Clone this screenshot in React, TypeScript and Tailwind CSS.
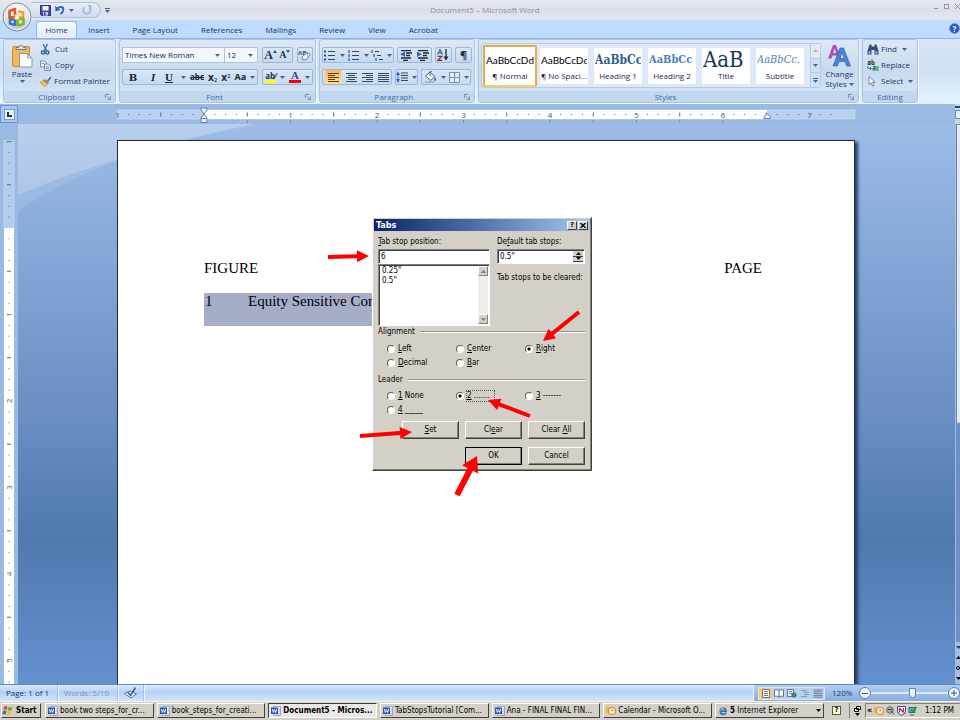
import React from "react";

const UI = "font-['Open_Sans','Noto_Sans',sans-serif]";
const CLASSIC = "font-['DejaVu_Sans_Condensed','Open_Sans',sans-serif]";

/* ---------- small shared pieces ---------- */

function Caret({ className = "text-[#44618f]" }: { className?: string }) {
  return (
    <svg width="5" height="3" viewBox="0 0 5 3" className={`shrink-0 ${className}`} aria-hidden="true">
      <path d="M0 0h5L2.5 3z" fill="currentColor" />
    </svg>
  );
}

function Launcher() {
  return (
    <svg width="6" height="6" viewBox="0 0 6 6" fill="none" stroke="#6c8fbf" aria-hidden="true">
      <path d="M.5 4V.5H4M2.5 2.5l2 2M5.500 2.500v3h-3" />
    </svg>
  );
}

function Group({ label, launcher = true, className = "", children }: {
  label: string; launcher?: boolean; className?: string; children: React.ReactNode;
}) {
  return (
    <section
      aria-label={label}
      className={`flex flex-col overflow-hidden rounded-[3px] border border-[#a9c4e6] bg-linear-to-b from-[#dde8f5] via-[#c9daee] to-[#d6e6f7] shadow-[1px_1px_0_#eef6ff] ${className}`}
    >
      <div className="flex min-h-0 flex-1">{children}</div>
      <div className="flex h-[11px] shrink-0 items-center bg-[#c1d8f0] px-1">
        <span className="flex-1 text-center leading-3 text-[#3e6aaa]">{label}</span>
        {launcher && (
          <button aria-label={`${label} options`}>
            <Launcher />
          </button>
        )}
      </div>
    </section>
  );
}

function Cluster({ className = "", children }: { className?: string; children: React.ReactNode }) {
  return (
    <div className={`flex h-4 items-center justify-around rounded-[2px] border border-[#9ab7dd] bg-linear-to-b from-[#d9e6f6] to-[#c6d9f0] ${className}`}>
      {children}
    </div>
  );
}

function Tool({ label, caret = false, className = "", children }: {
  label: string; caret?: boolean; className?: string; children: React.ReactNode;
}) {
  return (
    <button aria-label={label} className={`flex h-full items-center justify-center gap-1 ${className}`}>
      {children}
      {caret && <Caret />}
    </button>
  );
}

/* ---------- icons ---------- */

function OfficeLogo() {
  return (
    <svg width="30" height="30" viewBox="0 0 30 30" aria-hidden="true">
      <defs>
        <radialGradient id="orb" cx=".5" cy=".3" r=".75">
          <stop offset="0" stopColor="#fff" />
          <stop offset=".6" stopColor="#dde3ec" />
          <stop offset="1" stopColor="#aab6c8" />
        </radialGradient>
      </defs>
      <circle cx="15" cy="15" r="14" fill="url(#orb)" stroke="#7d8796" />
      <circle cx="15" cy="15" r="12.800" fill="none" stroke="#fff" strokeOpacity=".8" />
      <g fill="none" strokeWidth="2.600" strokeLinejoin="round">
        <path d="M7.500 9l5.500-2v7L7.500 15.800z" stroke="#e2571b" />
        <path d="M16 9.500l5 .9v5.200h-5" stroke="#f0a21c" />
        <path d="M8 17.500h5v5.500l-5-1.500z" stroke="#3a74c4" />
        <path d="M15.500 17h6v5l-6 1.500z" stroke="#7fb02e" />
      </g>
      <path d="M13 12.500h4v5h-4z" fill="#fff" stroke="#f3b53d" strokeWidth=".8" />
    </svg>
  );
}

function SaveIcon() {
  return (
    <svg width="11" height="11" viewBox="0 0 11 11" aria-hidden="true">
      <path d="M.5.5h10v10h-9l-1-1z" fill="#4a49a8" stroke="#31318a" />
      <path d="M2.500 1h6v4.500h-6z" fill="#eef3fb" />
      <path d="M3 7h5v3.500H3z" fill="#c7cfe6" />
      <path d="M4 7.500h1.500V10H4z" fill="#31318a" />
    </svg>
  );
}

function UndoIcon() {
  return (
    <svg width="10" height="10" viewBox="0 0 10 10" aria-hidden="true">
      <path d="M2.500 3.500C5 .8 8.500 1.700 8.300 4.700 8.200 6.700 7 8 5.300 9" fill="none" stroke="#2f62b5" strokeWidth="1.900" />
      <path d="M0 1l.6 5.500L5.500 4.800z" fill="#2f62b5" />
    </svg>
  );
}

function RedoIcon() {
  return (
    <svg width="10" height="10" viewBox="0 0 10 10" aria-hidden="true">
      <path d="M2.300 2.300C0 5 1.500 8.700 5 8.700S9.300 5 7.300 2.500" fill="none" stroke="#a9b9d2" strokeWidth="1.800" />
      <path d="M5 0h4.500v4.500z" fill="#a9b9d2" />
    </svg>
  );
}

function PasteIcon() {
  return (
    <svg width="21" height="24" viewBox="0 0 21 24" aria-hidden="true">
      <rect x=".5" y="2.500" width="17" height="20" rx="1.500" fill="#f0b95a" stroke="#c98b2e" />
      <path d="M4 5.500h10V3.500h-2.500C11 .6 7 .6 6.500 3.500H4z" fill="#d9dde3" stroke="#70757d" strokeWidth=".9" />
      <path d="M7.500 9.500h8l4.500 4.500v9h-12.500z" fill="#fff" stroke="#8b98ac" />
      <path d="M15.500 9.500V14H20z" fill="#cfd9e8" stroke="#8b98ac" strokeWidth=".8" />
    </svg>
  );
}

function CutIcon() {
  return (
    <svg width="11" height="11" viewBox="0 0 11 11" fill="none" aria-hidden="true">
      <path d="M3 0l3.800 7M7.500 0L4 7" stroke="#41608f" strokeWidth="1.200" />
      <circle cx="3" cy="8.500" r="1.600" stroke="#2557a4" strokeWidth="1.300" />
      <circle cx="7.300" cy="8.500" r="1.600" stroke="#2557a4" strokeWidth="1.300" />
    </svg>
  );
}

function CopyIcon() {
  return (
    <svg width="11" height="11" viewBox="0 0 11 11" stroke="#5878ab" strokeWidth=".8" aria-hidden="true">
      <path d="M.5 1h4l1.500 1.500V7H.5z" fill="#e6effb" />
      <path d="M4.500 4h4L10.500 6v4.500h-6z" fill="#d7e5f8" />
      <path d="M6 7h3M6 8.700h3M1.800 3.500h2" />
    </svg>
  );
}

function PainterIcon() {
  return (
    <svg width="12" height="11" viewBox="0 0 12 11" aria-hidden="true">
      <path d="M7 4.500L10.500.5l1 .9L8.500 5.500z" fill="#56649b" />
      <path d="M4.500 3l4.500 3-1 1.800L3.500 5z" fill="#7a83a8" />
      <path d="M3.500 4.500L8 7.500 5 10.500.3 6.700z" fill="#efb62f" stroke="#bb7c16" strokeWidth=".7" />
      <path d="M2.500 6.500L5.500 9" stroke="#fff2b5" />
    </svg>
  );
}

function EraserIcon() {
  return (
    <svg width="13" height="12" viewBox="0 0 13 12" aria-hidden="true">
      <text x="0" y="5.500" fontSize="6" fontWeight="700" fill="#44505f" fontFamily="Open Sans">AB</text>
      <path d="M4 8l5-4.500 3.200 1.800L8 10.800H5z" fill="#fafcff" stroke="#5b7090" strokeWidth=".9" />
      <path d="M9 3.500l.5 4" stroke="#5b7090" strokeWidth=".7" />
    </svg>
  );
}

function ListIcon({ kind }: { kind: "bullet" | "number" | "multi" }) {
  const indent = kind === "multi" ? [0, 2, 4] : [0, 0, 0];
  return (
    <svg width="12" height="11" viewBox="0 0 12 11" aria-hidden="true">
      {[0, 1, 2].map((i) => (
        <g key={i}>
          {kind === "bullet" ? (
            <rect x="0" y={i * 4 + 0.5} width="2" height="2" fill="#2b57a0" />
          ) : (
            <path d={`M${indent[i] + 1} ${i * 4}v3`} stroke="#2b57a0" strokeWidth="1.200" />
          )}
          <path d={`M${indent[i] + 4} ${i * 4 + 1.5}H${kind === "multi" ? indent[i] + 8 : 11}`} stroke="#3b4656" strokeWidth="1.200" />
        </g>
      ))}
    </svg>
  );
}

function IndentIcon({ out = false }: { out?: boolean }) {
  return (
    <svg width="12" height="11" viewBox="0 0 12 11" aria-hidden="true">
      <path d="M1 .5h10M6 3h6M6 5.500h4M1 8h10M3 10.500h5" stroke="#20262e" strokeWidth="1.400" />
      <path d={out ? "M5 1.500L0 4.300 5 7.100z" : "M0 1.500l5 2.800-5 2.800z"} fill="#2b67c6" />
    </svg>
  );
}

function AlignIcon({ kind }: { kind: "left" | "center" | "right" | "justify" }) {
  const d = {
    left: "M0 .5h11M0 2.500h7M0 4.500h11M0 6.500h7M0 8.500h11",
    center: "M0 .5h11M2 2.500h7M0 4.500h11M2 6.500h7M0 8.500h11",
    right: "M0 .5h11M4 2.500h7M0 4.500h11M4 6.500h7M0 8.500h11",
    justify: "M0 .5h11M0 2.500h11M0 4.500h11M0 6.500h11M0 8.500h11",
  }[kind];
  return (
    <svg width="11" height="9" viewBox="0 0 11 9" aria-hidden="true">
      <path d={d} stroke={kind === "left" ? "#5a3d14" : "#3b4656"} strokeWidth="1.100" />
    </svg>
  );
}

function SortIcon() {
  return (
    <svg width="12" height="12" viewBox="0 0 12 12" fill="none" aria-hidden="true">
      <path d="M.5 5.500L3 .5l2.500 5M1.500 4h3" stroke="#2b57a0" strokeWidth="1.100" />
      <path d="M.8 7.300h4L.8 11.300h4.400" stroke="#8d2434" strokeWidth="1.200" />
      <path d="M9 0v9" stroke="#20262e" strokeWidth="1.300" />
      <path d="M6.500 7.500h5L9 11.500z" fill="#20262e" />
    </svg>
  );
}

function SpacingIcon() {
  return (
    <svg width="12" height="12" viewBox="0 0 12 12" aria-hidden="true">
      <path d="M5 2h7M5 4.500h7M5 7h7M5 9.500h7" stroke="#3b4656" strokeWidth="1.100" />
      <path d="M2 2v8" stroke="#2b67c6" />
      <path d="M0 4l2-4 2 4zM0 8l2 4 2-4z" fill="#2b67c6" />
    </svg>
  );
}

function BucketIcon() {
  return (
    <svg width="13" height="12" viewBox="0 0 13 12" aria-hidden="true">
      <path d="M1.500 5L6 1l5 4.500-4.500 4z" fill="#f3f7fd" stroke="#4e6486" />
      <path d="M6 5V1c0-1 2-1 2 0" fill="none" stroke="#4e6486" />
      <path d="M11 6c2 2.500 1 4 0 4s-1.500-1.500 0-4z" fill="#3c73c9" />
      <path d="M1 11h9" stroke="#a9b5c7" strokeWidth="1.800" />
    </svg>
  );
}

function BordersIcon() {
  return (
    <svg width="11" height="11" viewBox="0 0 11 11" fill="none" stroke="#7f8fa8" aria-hidden="true">
      <path d="M.5.5h10v10H.5z" fill="#e3ecf8" />
      <path d="M5.500.5v10M.5 5.500h10" />
    </svg>
  );
}

function BinocularsIcon() {
  return (
    <svg width="12" height="11" viewBox="0 0 12 11" fill="#2e4f80" aria-hidden="true">
      <path d="M2.500.5h2v2h3v-2h2L11.500 7v3.500h-4V6h-3v4.500h-4V7z" />
      <path d="M1.500 7.500h2v2h-2zM8.500 7.500h2v2h-2z" fill="#a8c2e8" />
    </svg>
  );
}

function ReplaceIcon() {
  return (
    <svg width="13" height="12" viewBox="0 0 13 12" fill="none" aria-hidden="true">
      <path d="M1 2.500h2.200v3H1.200V4h2M5 .5v5M5 3h2v2.500H5" stroke="#39424f" strokeWidth="1.100" />
      <path d="M6 7.700h2.200v3.300H6.200V9.300h2M12 8h-2v3h2" stroke="#25893a" strokeWidth="1.200" />
      <path d="M1 7v2.500h3M3 8l1.500 1.500L3 11" stroke="#2b67c6" strokeWidth=".9" />
    </svg>
  );
}

function CursorIcon() {
  return (
    <svg width="9" height="11" viewBox="0 0 9 11" aria-hidden="true">
      <path d="M2 .5v8l2-1.800 1.500 3.500 1.400-.6L5.500 6.300H8z" fill="#fff" stroke="#596c8c" strokeWidth=".8" />
    </svg>
  );
}

function StylesIcon() {
  return (
    <svg width="23" height="23" viewBox="0 0 23 23" aria-hidden="true">
      <path fillRule="evenodd" d="M0 14.500L5 1h3l5 13.500h-3l-1-3H4.500l-1 3zM5.200 9h3L6.600 4.200z" fill="#ad4fb5" />
      <path fillRule="evenodd" d="M5 22L12 4h3.500L22.500 22h-4l-1.500-4.500h-6L9.500 22zM11.800 14.500h4.400l-2.200-6z" fill="#4b83d4" stroke="#295ca8" strokeWidth=".6" />
    </svg>
  );
}

function WordIcon() {
  return (
    <svg width="10" height="10" viewBox="0 0 10 10" className="shrink-0" aria-hidden="true">
      <path d="M2.500.5h7v9h-7z" fill="#f5f8fe" stroke="#8397c4" strokeWidth=".8" />
      <path d="M7.500 3h1.500M7.500 5h1.500M5 8h4" stroke="#7c93c9" strokeWidth=".8" />
      <path d="M0 1.500h7v6.500H0z" fill="#2c56a8" />
      <path d="M1.300 3l1 3.500 1.200-3 1.200 3 1-3.500" fill="none" stroke="#fff" strokeWidth=".9" />
    </svg>
  );
}

function OutlookIcon() {
  return (
    <svg width="10" height="10" viewBox="0 0 10 10" className="shrink-0" aria-hidden="true">
      <path d="M0 1h6v6H0z" fill="#f2b33c" />
      <circle cx="6" cy="5" r="3.500" fill="#fffbe8" stroke="#e08a1d" strokeWidth="1.200" />
      <path d="M6 3v2.200l1.500-.8" fill="none" stroke="#a3661a" strokeWidth=".8" />
    </svg>
  );
}

function ExplorerIcon() {
  return (
    <svg width="10" height="10" viewBox="0 0 10 10" className="shrink-0" fill="none" aria-hidden="true">
      <path d="M8 6.500C7 9 3 9 2.300 6 1.500 3 5 1.200 7 3c.8.700 1 1.500 1 2.200H3" stroke="#2474cf" strokeWidth="1.700" />
      <path d="M.7 9C-.8 7 4 .8 9.500.8" stroke="#efb82d" strokeWidth="1" />
    </svg>
  );
}

function WindowsIcon() {
  return (
    <svg width="12" height="11" viewBox="0 0 12 11" className="shrink-0" aria-hidden="true">
      <path d="M2 1.500q2-1 3.500 0L4.700 5Q3 4 1.200 5z" fill="#e2502b" />
      <path d="M6.300 1.800q2 1 4.200 0L9.600 5.300q-2 1-4 0z" fill="#6bb12f" />
      <path d="M1 6q2-1 3.500 0l-.8 3.500q-1.700-1-3.500 0z" fill="#3474d3" />
      <path d="M5.300 6.300q2 1 4 0l-.8 3.500q-2 1-4 0z" fill="#f3bc27" />
    </svg>
  );
}

/* ---------- title bar, tabs ---------- */

function TitleBar() {
  return (
    <header className="relative flex h-5 shrink-0 items-center bg-linear-to-b from-[#e4e9f0] via-[#dbe1ea] to-[#e3e7ee]">
      <button aria-label="Office Button" className="absolute left-[2px] top-[2px] z-10">
        <OfficeLogo />
      </button>
      <div className="ml-8 flex h-4 w-[69px] items-center rounded-r-full border border-l-0 border-[#b3c0d4] bg-linear-to-b from-[#e6edf7] to-[#d0dcec] pl-2">
        <button aria-label="Save"><SaveIcon /></button>
        <button aria-label="Undo" className="ml-1 flex items-center gap-1"><UndoIcon /><Caret /></button>
        <button aria-label="Repeat" className="ml-2"><RedoIcon /></button>
      </div>
      <button aria-label="Customize Quick Access Toolbar" className="ml-1 flex flex-col items-center gap-px">
        <span className="h-px w-[5px] bg-[#44618f]" />
        <Caret />
      </button>
      <h1 className="flex-1 pr-[74px] text-center leading-4 text-[#8b8f95]">Document5 – Microsoft Word</h1>
      <div className="mb-2 flex w-[26px] shrink-0 items-center gap-[6px]">
        <button aria-label="Minimize" className="mt-1 h-px w-1 shrink-0 bg-[#8f969f]" />
        <button aria-label="Restore" className="size-[5px] shrink-0 border border-[#8f969f]" />
        <button aria-label="Close" className="shrink-0">
          <svg width="5" height="5" viewBox="0 0 5 5" stroke="#8f969f" aria-hidden="true"><path d="M0 0l5 5M5 0L0 5" /></svg>
        </button>
      </div>
    </header>
  );
}

function Tabs() {
  const tabs = ["Insert", "Page Layout", "References", "Mailings", "Review", "View", "Acrobat"];
  return (
    <nav aria-label="Ribbon tabs" className="flex h-[18px] shrink-0 items-end bg-[#bfdbff] pl-9 text-[#1b3370]">
      <button className="h-[17px] w-[41px] rounded-t-[3px] border border-b-0 border-[#93b7e6] bg-linear-to-b from-[#f4f9ff] to-[#e1ecf8]">Home</button>
      <div className="ml-[11px] flex h-[17px] gap-[23px]">
        {tabs.map((t) => (
          <button key={t}>{t}</button>
        ))}
      </div>
      <button aria-label="Help" className="mb-1 ml-auto flex size-[11px] items-center justify-center rounded-full border border-[#7fa3dc] bg-[#1d58c4] font-bold leading-none text-white">?</button>
    </nav>
  );
}

/* ---------- ribbon ---------- */

const STYLES = [
  { name: "¶ Normal", sample: "AaBbCcDd", cls: "font-['Lato'] text-[10px] text-black" },
  { name: "¶ No Spaci...", sample: "AaBbCcDd", cls: "font-['Lato'] text-[10px] text-black" },
  { name: "Heading 1", sample: "AaBbCc", cls: "font-['DejaVu_Serif_Condensed'] text-[12px] font-bold text-[#2f5d93]" },
  { name: "Heading 2", sample: "AaBbCc", cls: "font-['DejaVu_Serif_Condensed'] text-[11px] font-bold text-[#4a7fbd]" },
  { name: "Title", sample: "AaB", cls: "font-['DejaVu_Serif_Condensed'] text-[22px] text-[#1b365d]" },
  { name: "Subtitle", sample: "AaBbCc.", cls: "font-['DejaVu_Serif_Condensed'] text-[11px] italic text-[#4a7fbd]" },
];

function Ribbon() {
  return (
    <div className="flex h-[66px] shrink-0 gap-[3px] border-t border-b border-[#8db2e3] border-b-[#d9f2fb] bg-linear-to-b from-[#d9e6f5] via-[#cfe0f3] to-[#e4f4ff] pl-[3px] text-[#1b3370]">
      <Group label="Clipboard" className="w-[113px]">
        <button className="flex w-[36px] flex-col items-center pt-1">
          <PasteIcon />
          <span className="leading-3">Paste</span>
          <Caret />
        </button>
        <div className="flex flex-col pt-px">
          <button className="flex h-4 items-center gap-1"><CutIcon />Cut</button>
          <button className="flex h-4 items-center gap-1"><CopyIcon />Copy</button>
          <button className="flex h-4 items-center gap-[2px]"><PainterIcon />Format Painter</button>
        </div>
      </Group>

      <Group label="Font" className="w-[197px]">
        <div className="flex w-full flex-col gap-[6px] px-[2px] pt-[7px]">
          <div className="flex gap-1">
            <div className="flex h-4 border border-[#abc3e4] bg-[#f3f8ff]">
              <div className="relative flex w-[102px] items-center border-r border-[#abc3e4]">
                <select aria-label="Font" className="w-full appearance-none pl-[2px] leading-3 text-[#1c2a45]"><option>Times New Roman</option></select>
                <Caret className="pointer-events-none absolute right-1 text-[#44618f]" />
              </div>
              <div className="relative flex w-[32px] items-center">
                <select aria-label="Font size" className="w-full appearance-none pl-[2px] leading-3 text-[#1c2a45]"><option>12</option></select>
                <Caret className="pointer-events-none absolute right-1 text-[#44618f]" />
              </div>
            </div>
            <Cluster className="w-[32px] font-['Liberation_Serif'] font-bold text-[#26324a]">
              <Tool label="Grow Font"><span className="flex text-[12px] leading-3">A<svg width="4" height="3" viewBox="0 0 4 3" className="mt-px" aria-hidden="true"><path d="M0 3l2-3 2 3z" fill="#2b57a0" /></svg></span></Tool>
              <Tool label="Shrink Font"><span className="flex text-[10px] leading-3">A<svg width="4" height="3" viewBox="0 0 4 3" className="mt-px" aria-hidden="true"><path d="M0 0l2 3 2-3z" fill="#2b57a0" /></svg></span></Tool>
            </Cluster>
            <Cluster className="w-[17px]"><Tool label="Clear Formatting"><EraserIcon /></Tool></Cluster>
          </div>
          <div className="flex gap-1">
            <Cluster className="w-[137px] font-['Liberation_Serif'] text-[11px] text-[#1c2431]">
              <Tool label="Bold" className="w-4 font-['DejaVu_Serif'] text-[10px] font-bold">B</Tool>
              <Tool label="Italic" className="w-4 font-bold italic">I</Tool>
              <Tool label="Underline" caret><span className="mr-1 font-bold underline">U</span></Tool>
              <Tool label="Strikethrough" className="font-['Open_Sans'] text-[8px] font-bold line-through">abc</Tool>
              <Tool label="Subscript" className="font-['Open_Sans'] text-[10px] font-bold"><span>x<sub className="text-[6px] text-[#2b57a0]">2</sub></span></Tool>
              <Tool label="Superscript" className="font-['Open_Sans'] text-[10px] font-bold"><span>x<sup className="text-[6px] text-[#2b57a0]">2</sup></span></Tool>
              <Tool label="Change Case" caret className="font-['Open_Sans'] text-[9px] font-bold">Aa</Tool>
            </Cluster>
            <Cluster className="w-[51px]">
              <Tool label="Highlight" caret>
                <span className="flex flex-col border-b-[3px] border-[#ffff00] font-bold leading-[9px] text-[#26324a]">ab⁄</span>
              </Tool>
              <Tool label="Font Color" caret>
                <span className="flex w-3 flex-col items-center border-b-[3px] border-[#f00] font-['Liberation_Serif'] text-[11px] font-bold leading-[9px] text-[#2b4a86]">A</span>
              </Tool>
            </Cluster>
          </div>
        </div>
      </Group>

      <Group label="Paragraph" className="w-[156px]">
        <div className="flex w-full flex-col gap-[6px] px-[2px] pt-[7px]">
          <div className="flex gap-[3px]">
            <Cluster className="w-[74px]">
              <Tool label="Bullets" caret><ListIcon kind="bullet" /></Tool>
              <Tool label="Numbering" caret><ListIcon kind="number" /></Tool>
              <Tool label="Multilevel List" caret><ListIcon kind="multi" /></Tool>
            </Cluster>
            <Cluster className="w-[35px]">
              <Tool label="Decrease Indent"><IndentIcon out /></Tool>
              <Tool label="Increase Indent"><IndentIcon /></Tool>
            </Cluster>
            <Cluster className="w-[18px]"><Tool label="Sort"><SortIcon /></Tool></Cluster>
            <Cluster className="w-[17px]"><Tool label="Show marks" className="text-[11px] font-bold text-[#26324a]">¶</Tool></Cluster>
          </div>
          <div className="flex gap-[3px]">
            <Cluster className="w-[70px]">
              <Tool label="Align Left" className="w-4 bg-linear-to-b from-[#f6b866] to-[#ffe08a]"><AlignIcon kind="left" /></Tool>
              <Tool label="Center"><AlignIcon kind="center" /></Tool>
              <Tool label="Align Right"><AlignIcon kind="right" /></Tool>
              <Tool label="Justify"><AlignIcon kind="justify" /></Tool>
            </Cluster>
            <Cluster className="w-[23px]"><Tool label="Line spacing" caret><SpacingIcon /></Tool></Cluster>
            <Cluster className="w-[50px]">
              <Tool label="Shading" caret><BucketIcon /></Tool>
              <Tool label="Borders" caret><BordersIcon /></Tool>
            </Cluster>
          </div>
        </div>
      </Group>

      <Group label="Styles" className="w-[381px]">
        <div className="ml-[2px] mt-[3px] flex h-[45px] w-[340px] items-center rounded-[3px] border border-[#b4cbe8] bg-[#dbe9f8]">
          <div className="flex min-w-0 flex-1 items-center gap-[6px] pl-px">
            {STYLES.map((s, i) => (
              <button
                key={s.name}
                className={i === 0
                  ? "-mr-[3px] flex h-[42px] w-[54px] shrink-0 flex-col justify-center overflow-hidden rounded-[2px] border-2 border-[#e9a94a] border-b-[#f8cd5c] bg-white"
                  : "flex h-9 w-12 shrink-0 flex-col justify-center overflow-hidden bg-white"}
              >
                <span className="mx-px flex h-[20px] items-center overflow-hidden">
                  <span className={`whitespace-nowrap leading-5 ${s.cls}`}>{s.sample}</span>
                </span>
                <span className="w-full whitespace-nowrap text-center leading-3 text-[#1e1e5a]">{s.name}</span>
              </button>
            ))}
          </div>
          <div className="flex h-full w-[10px] shrink-0 flex-col border-l border-[#b4cbe8]">
            <button aria-label="Row up" className="flex flex-1 items-center justify-center bg-[#e6e9ee]"><Caret className="rotate-180 text-[#a8b0bc]" /></button>
            <button aria-label="Row down" className="flex flex-1 items-center justify-center border-y border-[#b4cbe8] bg-[#cfe0f4]"><Caret /></button>
            <button aria-label="More styles" className="flex flex-1 flex-col items-center justify-center gap-px bg-[#cfe0f4]"><span className="h-px w-[5px] bg-[#44618f]" /><Caret /></button>
          </div>
        </div>
        <button className="flex flex-1 flex-col items-center pt-1">
          <StylesIcon />
          <span className="mt-[2px] leading-[10px]">Change</span>
          <span className="flex items-center gap-[2px] leading-[10px]">Styles <Caret /></span>
        </button>
      </Group>

      <Group label="Editing" launcher={false} className="w-[56px]">
        <div className="flex flex-col pl-1 pt-px">
          <button className="flex h-4 items-center gap-[2px]"><BinocularsIcon />Find <Caret className="ml-[3px] text-[#44618f]" /></button>
          <button className="flex h-4 items-center gap-px"><ReplaceIcon />Replace</button>
          <button className="flex h-4 items-center gap-[5px]"><CursorIcon />Select <Caret /></button>
        </div>
      </Group>
    </div>
  );
}

/* ---------- rulers ---------- */

const INCH = 86.5;

function marks(from: number, to: number) {
  const list: { at: number; kind: "num" | "half" | "dot"; n: number }[] = [];
  for (let e = from; e <= to; e++) {
    list.push({ at: (e * INCH) / 8, kind: e % 8 === 0 ? "num" : e % 4 === 0 ? "half" : "dot", n: Math.abs(e / 8) });
  }
  return list.filter((m) => !(m.kind === "num" && m.n === 0));
}

function HorizontalRuler() {
  return (
    <div className="flex h-5 shrink-0 items-center bg-[#9ab9e3]">
      <button aria-label="Tab selector" className="flex h-[18px] w-[18px] items-center justify-center border border-[#6b93d6] bg-[#a9c6ee]">
        <span className="flex size-[11px] items-center justify-center border border-[#7b9cd0] bg-[#e7effa]">
          <span className="size-[5px] border-b-2 border-l-2 border-[#26324a]" />
        </span>
      </button>
      <div className="flex flex-1 justify-center pr-px">
        <svg width="738" height="18" viewBox="-87 0 738 18" className="overflow-visible" aria-label="Horizontal ruler">
          <rect x="-87" y="5" width="738" height="9" fill="#b9d0ee" stroke="#cfdff5" strokeWidth=".6" />
          <rect x="0" y="5" width="563" height="9" fill="#fff" />
          {marks(-8, 58).map((m) =>
            m.kind === "num" ? (
              <text key={m.at} x={m.at} y="12.500" textAnchor="middle" fontSize="8" fill="#4a5464">{m.n}</text>
            ) : (
              <path key={m.at} d={m.kind === "half" ? `M${m.at} 7.500v4` : `M${m.at} 9v1`} stroke="#5b6675" />
            ),
          )}
          {Array.from({ length: 12 }, (_, i) => (
            <path key={i} d={`M${((i + 1) * INCH) / 2} 15.500v2`} stroke="#5f7ea9" />
          ))}
          <path d="M-3 3h6v2L0 9l-3-4zM-3 13l3-4 3 4v4.500h-6zM-3 13.500h6M560 13.500v-1.500l3-3.500 3.500 3.500v1.500z" fill="#e9eff8" stroke="#60769b" strokeWidth=".9" />
        </svg>
      </div>
      <button aria-label="View Ruler" className="flex h-full w-[5px] flex-col gap-[2px] bg-[#c4d7f1] pt-[2px]">
        <span className="h-[2px] w-full bg-[#2d456e]" />
        <span className="h-[9px] w-full border border-r-0 border-[#7089b0] bg-[#e9f0fa]" />
      </button>
    </div>
  );
}

function VerticalRuler() {
  return (
    <div className="w-[18px] shrink-0 overflow-hidden bg-[#9ab9e3] pt-4">
      <svg width="18" height="900" viewBox="0 -88 18 900" aria-label="Vertical ruler">
        <rect x="4" y="-88" width="10" height="88" fill="#b3cbec" stroke="#c9dbf3" strokeWidth=".6" />
        <rect x="4" y="0" width="10" height="812" fill="#fff" />
        {marks(-8, 70).map((m) =>
          m.kind === "num" ? (
            <text key={m.at} transform={`translate(12 ${m.at}) rotate(-90)`} textAnchor="middle" fontSize="8" fill="#4a5464">{m.n}</text>
          ) : (
            <path key={m.at} d={m.kind === "half" ? `M7 ${m.at}h4` : `M8.500 ${m.at}h1`} stroke="#5b6675" />
          ),
        )}
      </svg>
    </div>
  );
}

/* ---------- dialog ---------- */

const RAISED = "border border-t-white border-l-white border-r-[#404040] border-b-[#404040] bg-[#d4d0c8]";
const SUNKEN = "border border-t-[#808080] border-l-[#808080] border-r-white border-b-white bg-white shadow-[inset_1px_1px_0_#404040]";

/* The character between two ampersands is the underlined access key. */
function Key({ text }: { text: string }) {
  const [a, b, c] = text.split("&");
  return <span className="whitespace-pre">{a}{b && <u>{b}</u>}{c}</span>;
}

function Radio({ name, text, checked = false, focused = false }: { name: string; text: string; checked?: boolean; focused?: boolean }) {
  return (
    <label className="flex h-[14px] items-center gap-[3px]">
      <input
        type="radio"
        name={name}
        defaultChecked={checked}
        className="size-2 appearance-none rounded-full border border-t-[#606060] border-l-[#606060] border-r-white border-b-white bg-white checked:bg-[radial-gradient(circle,#000_0_1px,#fff_2px)]"
      />
      <span className={focused ? "-ml-px border border-dotted border-[#555] pr-1 leading-[10px]" : "leading-3"}><Key text={text} /></span>
    </label>
  );
}

function PushButton({ text, primary = false }: { text: string; primary?: boolean }) {
  return (
    <button className={`h-[18px] w-[57px] leading-3 shadow-[inset_-1px_-1px_0_#808080] ${RAISED} ${primary ? "outline-1 -outline-offset-1 outline-black" : ""}`}>
      <Key text={text} />
    </button>
  );
}

function Section({ title }: { title: string }) {
  return (
    <legend className="flex w-full items-center gap-[5px] leading-3">
      {title}
      <span className="h-[2px] flex-1 border-t border-b border-t-[#909090] border-b-white" />
    </legend>
  );
}

function arrow(x1: number, y1: number, x2: number, y2: number, w: number, head: number, len: number) {
  const d = Math.hypot(x2 - x1, y2 - y1);
  const ux = (x2 - x1) / d;
  const uy = (y2 - y1) / d;
  const bx = x2 - ux * len;
  const by = y2 - uy * len;
  const p = (x: number, y: number, k: number) => `${x - uy * k},${y + ux * k}`;
  return [p(x1, y1, w), p(bx, by, w), p(bx, by, head), `${x2},${y2}`, p(bx, by, -head), p(bx, by, -w), p(x1, y1, -w)].join(" ");
}

function Annotations() {
  return (
    <svg className="pointer-events-none absolute -left-4 -top-px overflow-visible" width="240" height="290" viewBox="357 217 240 290" fill="#f00" aria-hidden="true">
      <polygon points={arrow(328, 257, 369, 256, 2, 6, 12)} />
      <polygon points={arrow(579, 312, 543, 341, 2, 6, 12)} />
      <polygon points={arrow(530, 416, 488, 400, 2, 6, 12)} />
      <polygon points={arrow(360, 436, 412, 432, 2, 6, 12)} />
      <polygon points={arrow(457, 495, 477, 456, 3, 9, 15)} />
    </svg>
  );
}

function TabsDialog() {
  return (
    <div role="dialog" aria-label="Tabs" className={`absolute left-[254px] top-[76px] w-[220px] p-px pb-[5px] text-[8px] text-black shadow-[inset_-1px_-1px_0_#808080] ${CLASSIC} ${RAISED}`}>
      <div className="flex h-3 items-center gap-px bg-linear-to-r from-[#0a246a] to-[#a6caf0] pl-[2px] pr-[2px]">
        <h2 className="flex-1 text-[9px] font-bold leading-3 text-white">Tabs</h2>
        <button aria-label="Help" className={`flex h-[9px] w-[10px] items-center justify-center text-[7px] font-bold leading-none ${RAISED}`}>?</button>
        <button aria-label="Close" className={`flex h-[9px] w-[10px] items-center justify-center ${RAISED}`}>
          <svg width="6" height="5" viewBox="0 0 6 5" stroke="#000" strokeWidth="1.300" aria-hidden="true"><path d="M.5 0l5 5M5.500 0l-5 5" /></svg>
        </button>
      </div>

      <div className="pl-[4px] pr-[5px] pt-[5px]">
        <div className="flex gap-[7px]">
          <div className="w-[112px]">
            <label htmlFor="pos" className="block leading-3"><Key text="&T&ab stop position:" /></label>
            <input id="pos" defaultValue="6" className={`mt-px block h-[15px] w-full pl-[2px] ${SUNKEN}`} />
            <div className={`flex h-[62px] p-px ${SUNKEN}`}>
              <ul aria-label="Tab stops" className="flex-1 pl-[2px] leading-[10px]">
                <li>0.25"</li>
                <li>0.5"</li>
              </ul>
              <div className="flex w-[10px] flex-col justify-between bg-[#efedea]">
                <button aria-label="Scroll up" className="flex h-[10px] items-center justify-center border border-t-white border-l-white border-r-[#808080] border-b-[#808080] bg-[#d4d0c8]"><Caret className="rotate-180 text-[#808080]" /></button>
                <button aria-label="Scroll down" className="flex h-[10px] items-center justify-center border border-t-white border-l-white border-r-[#808080] border-b-[#808080] bg-[#d4d0c8]"><Caret className="text-[#808080]" /></button>
              </div>
            </div>
          </div>
          <div className="w-[88px]">
            <label htmlFor="def" className="block leading-3"><Key text="De&f&ault tab stops:" /></label>
            <div className={`mt-px flex h-[15px] p-px ${SUNKEN}`}>
              <input id="def" defaultValue={'0.5"'} className="min-w-0 flex-1 pl-px" />
              <div className="flex w-[10px] flex-col">
                <button aria-label="Increase" className="flex h-[6px] items-center justify-center border-b border-[#404040] bg-[#d4d0c8]"><Caret className="rotate-180 text-black" /></button>
                <button aria-label="Decrease" className="flex h-[6px] items-center justify-center border-b border-[#404040] bg-[#d4d0c8]"><Caret className="text-black" /></button>
              </div>
            </div>
            <p className="mt-2 whitespace-nowrap leading-3">Tab stops to be cleared:</p>
          </div>
        </div>

        <fieldset>
          <Section title="Alignment" />
          <div className="mt-1 grid grid-cols-[69px_69px_1fr] pl-[9px]">
            <Radio name="align" text="&L&eft" />
            <Radio name="align" text="&C&enter" />
            <Radio name="align" text="&R&ight" checked />
            <Radio name="align" text="&D&ecimal" />
            <Radio name="align" text="&B&ar" />
          </div>
        </fieldset>
        <fieldset className="mt-1">
          <Section title="Leader" />
          <div className="mt-[3px] grid grid-cols-[69px_69px_1fr] pl-[9px]">
            <Radio name="leader" text="&1& None" />
            <Radio name="leader" text="&2& ......." checked focused />
            <Radio name="leader" text="&3& -------" />
            <Radio name="leader" text="&4& _____" />
          </div>
        </fieldset>

        <div className="mt-1 flex flex-wrap justify-end gap-x-[6px] gap-y-2">
          <PushButton text="&S&et" />
          <PushButton text="Cl&e&ar" />
          <PushButton text="Clear &A&ll" />
          <PushButton text="OK" primary />
          <PushButton text="Cancel" />
        </div>
      </div>
      <Annotations />
    </div>
  );
}

/* ---------- document ---------- */

function Workspace() {
  return (
    <div className="flex min-h-0 flex-1">
      <VerticalRuler />
      <main className="relative flex flex-1 justify-center overflow-hidden bg-linear-to-b from-[#9dbde8] via-[#6d91c5] via-48% to-[#6490cf] pr-px pt-4">
        <div className="absolute inset-0 bg-linear-to-b from-transparent from-50% via-[#4f79af] via-74% to-transparent" />
        <svg className="absolute left-0 top-0" width="240" height="90" viewBox="0 0 240 90" aria-hidden="true">
          <path d="M0 0h236Q90 26 0 87z" fill="#fff" fillOpacity=".1" />
          <path d="M0 0h236Q90 32 0 71z" fill="#fff" fillOpacity=".2" />
        </svg>
        <article className="relative w-[738px] border border-b-0 border-[#1d2b42] bg-white px-[86px] pt-[119px] font-['Liberation_Serif',serif] text-[15px] leading-4 text-black shadow-[3px_2px_3px_#26416b]">
          <div className="flex justify-between pr-[6px]">
            <span>FIGURE</span>
            <span>PAGE</span>
          </div>
          <div className="mt-[17px] flex h-[33px] w-[200px] overflow-hidden whitespace-nowrap bg-[#a5adc9] pl-px">
            <span className="w-[43px] shrink-0">1</span>
            <span>Equity Sensitive Cons</span>
          </div>
          <TabsDialog />
        </article>
      </main>
      <div className="flex w-[5px] shrink-0 flex-col border-l border-[#9dbbe6] bg-[#6c8fc6]">
        <div className="h-[300px] rounded-b-[2px] border border-r-0 border-[#6f87ac] bg-[#e2e9f3]" />
        <div className="mt-auto flex h-[42px] flex-col items-center justify-around bg-[#a3bfe8]">
          <Caret className="text-[#2d456e]" />
          <Caret className="rotate-180 text-black" />
          <span className="size-1 rounded-full border border-black" />
          <Caret className="text-black" />
        </div>
      </div>
    </div>
  );
}

/* ---------- status bar ---------- */

function StatusBar() {
  const cell = "flex h-full items-center border-r border-[#9fc0ec] shadow-[1px_0_0_#eef5ff]";
  return (
    <footer className="flex h-[17px] shrink-0 items-center border-t border-[#5f86bd] bg-linear-to-b from-[#dceaff] via-[#b4d0f6] via-45% to-[#d5e5fb] text-[#1b3370]">
      <span className={`w-[58px] pl-[6px] ${cell}`}>Page: 1 of 1</span>
      <span className={`w-[60px] pl-[6px] text-[#8090ab] ${cell}`}>Words: 5/10</span>
      <button aria-label="Proofing" className={`w-[26px] justify-center ${cell}`}>
        <svg width="13" height="12" viewBox="0 0 13 12" aria-hidden="true">
          <path d="M.5 6.500L6 4l6.500 3L7 11z" fill="#f7f9fd" stroke="#5c6f93" />
          <path d="M3.500 5l3 3.500L11.500.5" fill="none" stroke="#2f5fc0" strokeWidth="1.600" />
        </svg>
      </button>
      <div className="ml-auto flex h-full items-center border-l border-[#f0f6ff] bg-linear-to-b from-[#b3cff3] to-[#87adde] pl-1">
        <div className="flex h-[13px] items-center border border-[#dbe8fa] bg-[#b9d1f0]">
          {["Print Layout", "Full Screen Reading", "Web Layout", "Outline", "Draft"].map((v, i) => (
            <button key={v} aria-label={v} className={`flex h-full w-[13px] items-center justify-center ${i === 0 ? "bg-[#fbcb73]" : ""}`}>
              <svg width="10" height="9" viewBox="0 0 10 9" fill="none" stroke="#56657c" strokeWidth=".9" aria-hidden="true">
                {i === 0 && <path d="M1.500.5h7v8h-7zM3 2.500h4M3 4.500h4M3 6.500h4" fill="#fff" />}
                {i === 1 && <path d="M5 1.500C3.500.5 2 .5.500 1v6.500c1.500-.5 3-.5 4.500.5 1.500-1 3-1 4.500-.5V1C8 .5 6.500.5 5 1.500zV8" fill="#fff" />}
                {i === 2 && <><path d="M.5.5h6v7h-6zM2 2.500h3M2 4.500h3" fill="#fff" /><circle cx="7" cy="6" r="2.200" fill="#3e8f79" stroke="#2b67a6" /></>}
                {i === 3 && <path d="M1 1.500h6M4 3.500h5M4 5.500h5M1 7.500h6" stroke="#8794ab" />}
                {i === 4 && <path d="M.5 1h9M.5 2.800h9M.5 4.600h9M.5 6.400h9M.5 8.200h9" stroke="#66758f" />}
              </svg>
            </button>
          ))}
        </div>
        <button className="ml-[7px] w-[27px] text-left">120%</button>
        <button aria-label="Zoom out" className="flex size-3 items-center justify-center rounded-full border border-[#5f7fb3] bg-[#edf3fc]"><span className="h-px w-[6px] bg-[#38517d]" /></button>
        <input
          type="range"
          aria-label="Zoom"
          defaultValue={54}
          className="h-3 w-[77px] appearance-none bg-[linear-gradient(#dce9fb,#dce9fb)] bg-[length:100%_2px] bg-center bg-no-repeat [&::-webkit-slider-thumb]:h-[10px] [&::-webkit-slider-thumb]:w-[7px] [&::-webkit-slider-thumb]:appearance-none [&::-webkit-slider-thumb]:rounded-b-[3px] [&::-webkit-slider-thumb]:border [&::-webkit-slider-thumb]:border-[#5f7fb3] [&::-webkit-slider-thumb]:bg-[#edf3fc]"
        />
        <button aria-label="Zoom in" className="flex size-3 items-center justify-center rounded-full border border-[#5f7fb3] bg-[#edf3fc]">
          <svg width="6" height="6" viewBox="0 0 6 6" stroke="#38517d" aria-hidden="true"><path d="M3 0v6M0 3h6" /></svg>
        </button>
      </div>
    </footer>
  );
}

/* ---------- taskbar ---------- */

const TASKS = [
  { icon: <WordIcon />, text: "book two steps_for_cr..." },
  { icon: <WordIcon />, text: "book_steps_for_creati..." },
  { icon: <WordIcon />, text: "Document5 - Micros...", active: true },
  { icon: <WordIcon />, text: "TabStopsTutorial [Com..." },
  { icon: <WordIcon />, text: "Ana - FINAL FINAL FIN..." },
  { icon: <OutlookIcon />, text: "Calendar - Microsoft O..." },
];

function Taskbar() {
  const btn = "flex h-[15px] items-center gap-[2px] overflow-hidden whitespace-nowrap";
  return (
    <div className={`flex h-[19px] shrink-0 items-center bg-[#d4d0c8] pl-px text-[8px] text-black shadow-[inset_0_1px_0_#f4f2ee] ${CLASSIC}`}>
      <button className={`${btn} mr-1 w-10 font-bold ${RAISED}`}><WindowsIcon />Start</button>
      <div className="flex min-w-0 flex-1 gap-[3px]">
        {TASKS.map((t) => (
          <button
            key={t.text}
            className={`${btn} max-w-[109px] flex-1 pl-[2px] ${t.active ? "border border-t-[#404040] border-l-[#404040] border-r-white border-b-white bg-[#eae8e4] font-bold" : RAISED}`}
          >
            {t.icon}<span>{t.text}</span>
          </button>
        ))}
        <button className={`${btn} max-w-[109px] flex-1 pl-[2px] pr-[2px] ${RAISED}`}>
          <ExplorerIcon /><span className="flex-1 text-left"><b>5</b> Internet Explorer</span><Caret className="text-black" />
        </button>
      </div>
      <button aria-label="Help" className="mx-2 flex h-[9px] w-[9px] shrink-0 items-center justify-center border border-[#555] bg-[#fffbd0] text-[7px] font-bold leading-none">?</button>
      <div className="flex h-[15px] w-[16px] shrink-0 flex-col items-center justify-center gap-px border-l border-[#808080]">
        <svg width="7" height="6" viewBox="0 0 7 6" fill="#fff" stroke="#000" aria-hidden="true"><path d="M2.500.5h4v3h-4zM.5 2.500h4v3h-4z" /></svg>
        <Caret className="text-black" />
      </div>
      <div className="flex h-[15px] w-[95px] shrink-0 items-center gap-[2px] border border-r-0 border-t-[#808080] border-l-[#808080] border-b-white pl-px">
        <button aria-label="Show hidden icons" className="text-[9px] font-bold leading-none">«</button>
        <OutlookIcon />
        <svg width="9" height="9" viewBox="0 0 9 9" aria-hidden="true"><circle cx="4" cy="4" r="3.300" fill="#aaa" stroke="#666" /><path d="M2 3.500h4M5 5l3.500 3.500" stroke="#444" /></svg>
        <svg width="9" height="10" viewBox="0 0 9 10" aria-hidden="true"><path d="M.5.5h8v5q-1 3-4 4-3-1-4-4z" fill="#fff" stroke="#254c9c" /><path d="M2.500 2v4.500M6.500 2v4.500M2.500 2l4 4.500" stroke="#c8232c" strokeWidth="1.300" /></svg>
        <svg width="9" height="10" viewBox="0 0 9 10" aria-hidden="true"><path d="M1 1.500h6v5H1zM2 9h4" fill="#57a6c8" stroke="#35608b" /><path d="M3 3.500l2 2L8.500 1" fill="none" stroke="#21a038" strokeWidth="1.600" /></svg>
        <time className="ml-auto whitespace-nowrap pr-[6px]">1:12 PM</time>
      </div>
    </div>
  );
}

export default function App() {
  return (
    <div className={`flex h-screen flex-col overflow-hidden text-[8px] ${UI}`}>
      <TitleBar />
      <Tabs />
      <Ribbon />
      <HorizontalRuler />
      <Workspace />
      <StatusBar />
      <Taskbar />
    </div>
  );
}
